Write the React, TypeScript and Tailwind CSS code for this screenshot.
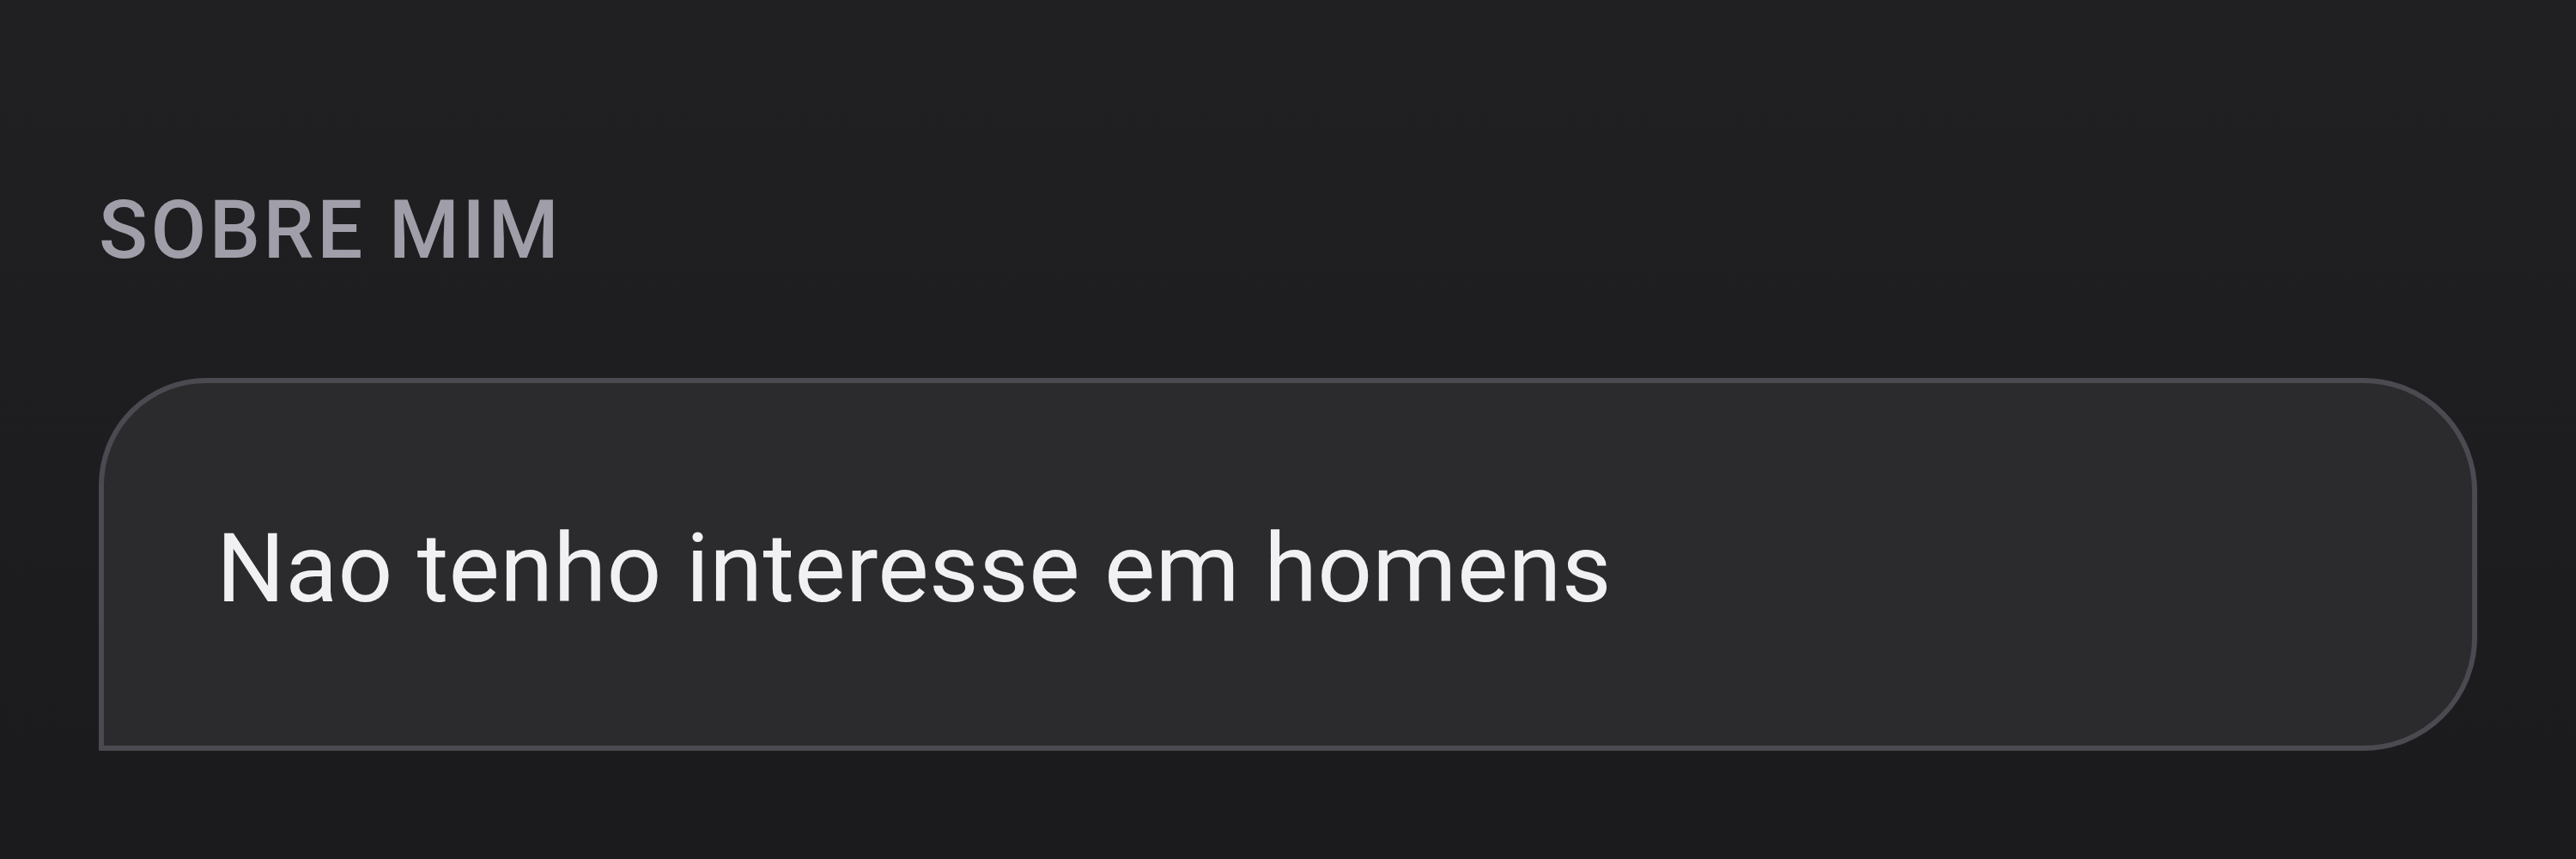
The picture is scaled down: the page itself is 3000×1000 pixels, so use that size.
export default function App() {
  return (
    <div className="w-full h-[1000px] bg-gradient-to-b from-[#202023] to-[#1b1b1e] pl-[115px] pr-[115px] pt-[221px] font-['Roboto','Liberation_Sans',sans-serif]">
      {/* Section label */}
      <h3 className="text-[94px] leading-none font-medium tracking-[3.5px] text-[#a09fa9]">SOBRE MIM</h3>

      {/* Bio card */}
      <div className="mt-[125px] h-[434px] border-[6px] border-[#4a4a50] bg-[#2b2b2e] rounded-tl-[125px] rounded-tr-[132px] rounded-br-[132px] rounded-bl-none pl-[131px] pt-[160px]">
        <p className="text-[112px] leading-none font-normal tracking-[0.3px] text-[#f1f1f3]">Nao tenho interesse em homens</p>
      </div>
    </div>
  );
}
